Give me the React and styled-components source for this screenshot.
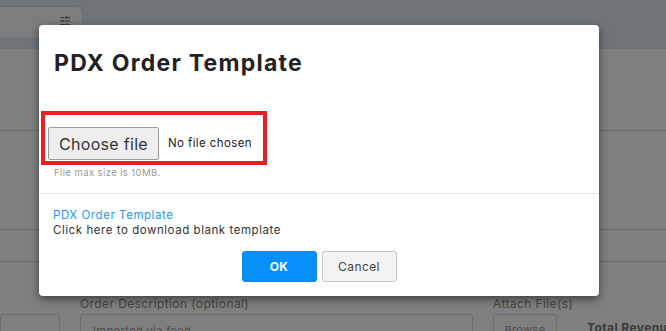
import React from 'react';
import styled, { createGlobalStyle } from 'styled-components';
import { SlidersHorizontal } from 'lucide-react';

const GlobalStyle = createGlobalStyle`
  html, body {
    margin: 0;
    padding: 0;
    background: #fff;
  }
  body {
    font-family: 'Inter', 'Open Sans', sans-serif;
    color: #333;
    letter-spacing: 0.4px;
  }
`;

const App = () => {
  return (
    <Page>
      <GlobalStyle />
      <HeaderBand>
        <FilterCard>
          <SlidersHorizontal size={12} color='#444' strokeWidth={1.6} />
        </FilterCard>
      </HeaderBand>
      <Section $height={81} />
      <Section $height={98} />
      <Section $height={31} />
      <FormRow>
        <Field $width={60}>
          <FieldLabel>&nbsp;</FieldLabel>
          <FieldBox />
        </Field>
        <Field $width={393}>
          <FieldLabel>Order Description (optional)</FieldLabel>
          <FieldBox>Imported via feed</FieldBox>
        </Field>
        <Field $width={64}>
          <FieldLabel>Attach File(s)</FieldLabel>
          <BrowseButton>Browse</BrowseButton>
        </Field>
        <Total>Total Revenue</Total>
      </FormRow>

      <Backdrop />
      <Modal>
        <Title>PDX Order Template</Title>
        <Body>
          <Highlight>
            <FileButton>Choose file</FileButton>
            <FileName>No file chosen</FileName>
          </Highlight>
          <Hint>File max size is 10MB.</Hint>
        </Body>
        <Footer>
          <TemplateLink>PDX Order Template</TemplateLink>
          <Note>Click here to download blank template</Note>
          <Actions>
            <Button $primary>OK</Button>
            <Button>Cancel</Button>
          </Actions>
        </Footer>
      </Modal>
    </Page>
  );
};

export default App;

const Page = styled.div`
  position: relative;
  width: 666px;
  height: 331px;
  overflow: hidden;
  background: #fff;
`;

const HeaderBand = styled.div`
  height: 49px;
  background: #dee8f0;
  display: flex;
  align-items: flex-start;
`;

const FilterCard = styled.div`
  margin-top: 6px;
  width: 83px;
  height: 31px;
  background: #f8fafc;
  border-radius: 0 6px 0 0;
  border-right: 1px solid #d4dbe2;
  border-top: 1px solid #d4dbe2;
  box-sizing: border-box;
  display: flex;
  justify-content: flex-end;
  padding: 8px 11px 0 0;
`;

const Section = styled.div`
  height: ${(p) => p.$height}px;
  border-bottom: 1px solid #d9d9d9;
`;

const FormRow = styled.div`
  display: flex;
  align-items: flex-start;
  gap: 20px;
  padding-top: 34px;
`;

const Field = styled.div`
  width: ${(p) => p.$width}px;
  flex-shrink: 0;
  display: flex;
  flex-direction: column;
  gap: 2px;
`;

const FieldLabel = styled.div`
  font-size: 12px;
  color: #8a8a8a;
  line-height: 16px;
  white-space: nowrap;
`;

const FieldBox = styled.div`
  height: 30px;
  border: 1px solid #d9d9d9;
  border-radius: 3px;
  padding: 9px 12px;
  box-sizing: border-box;
  font-size: 11px;
  color: #999;
`;

const BrowseButton = styled.div`
  height: 30px;
  border: 1px solid #d9d9d9;
  border-radius: 2px;
  font-size: 11px;
  color: #999;
  text-align: center;
  padding-top: 8px;
  box-sizing: border-box;
`;

const Total = styled.div`
  margin-top: 24px;
  margin-left: 10px;
  font-size: 12px;
  font-weight: 700;
  color: #777;
  white-space: nowrap;
`;

const Backdrop = styled.div`
  position: absolute;
  inset: 0;
  background: rgba(0, 0, 0, 0.5);
`;

const Modal = styled.div`
  position: absolute;
  left: 39px;
  top: 25px;
  width: 560px;
  height: 271px;
  background: #fff;
  border-radius: 4px;
  box-shadow: 0 3px 9px rgba(0, 0, 0, 0.5);
  display: flex;
  flex-direction: column;
`;

const Title = styled.h2`
  margin: 0;
  padding: 24px 15px 0;
  font-size: 23px;
  line-height: 28px;
  font-weight: 700;
  letter-spacing: 1.25px;
  color: #222;
`;

const Body = styled.div`
  padding: 34px 15px 0 2px;
  height: 117px;
  box-sizing: border-box;
  border-bottom: 1px solid #e5e5e5;
`;

const Highlight = styled.div`
  width: 226px;
  height: 54px;
  box-sizing: border-box;
  border: 4px solid #ee1c25;
  display: flex;
  align-items: flex-end;
  padding: 0 0 1px 3px;
`;

const FileButton = styled.div`
  width: 111px;
  height: 33px;
  box-sizing: border-box;
  border: 1px solid #9a9a9a;
  border-radius: 2px;
  background: #efefef;
  font-size: 16px;
  letter-spacing: 0.3px;
  color: #333;
  display: flex;
  align-items: center;
  justify-content: center;
`;

const FileName = styled.span`
  margin-left: 9px;
  font-size: 11.5px;
  color: #222;
  line-height: 33px;
`;

const Hint = styled.div`
  margin: 2px 0 0 13px;
  font-size: 9.5px;
  color: #999;
`;

const Footer = styled.div`
  padding: 14px 14px 0;
  display: flex;
  flex-direction: column;
`;

const TemplateLink = styled.a`
  font-size: 11.5px;
  letter-spacing: 0.55px;
  color: #1a9bf0;
  line-height: 15px;
  cursor: pointer;
`;

const Note = styled.div`
  font-size: 11.5px;
  letter-spacing: 0.55px;
  color: #333;
  line-height: 15px;
`;

const Actions = styled.div`
  display: flex;
  justify-content: center;
  gap: 5px;
  margin-top: 13px;
`;

const Button = styled.button`
  width: 75px;
  height: 31px;
  box-sizing: border-box;
  border-radius: 3px;
  font-family: 'Inter', sans-serif;
  font-size: 12px;
  letter-spacing: 0.4px;
  font-weight: ${(p) => (p.$primary ? 700 : 400)};
  color: ${(p) => (p.$primary ? '#fff' : '#444')};
  background: ${(p) => (p.$primary ? '#0590fc' : '#f3f3f3')};
  border: 1px solid ${(p) => (p.$primary ? '#0a86e0' : '#c4c4c4')};
`;
